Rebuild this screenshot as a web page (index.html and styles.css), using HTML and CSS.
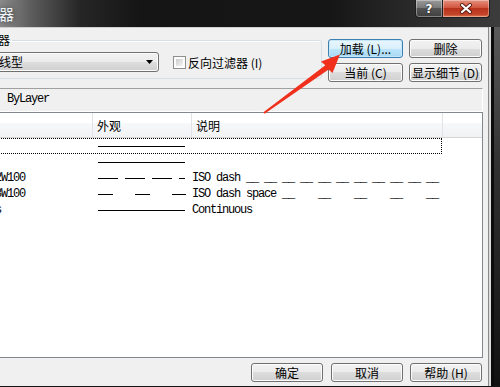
FILE: index.html
```html
<!DOCTYPE html>
<html>
<head>
    <meta charset="utf-8">
    <title>线型管理器</title>
    <link rel="stylesheet" href="styles.css">
</head>
<body>
<div class="window">
    <div class="titlebar">
        <span class="title">线型管理器</span>
        <div class="captionButtons">
            <span class="capHelp">?</span>
            <span class="capClose">
                <svg width="14" height="11" viewBox="0 0 14 11">
                    <path d="M3 2 L11 9 M11 2 L3 9" stroke="#5a1a10" stroke-width="4" stroke-linecap="round"/>
                    <path d="M3 2 L11 9 M11 2 L3 9" stroke="#fff" stroke-width="2.2" stroke-linecap="round"/>
                </svg>
            </span>
        </div>
    </div>

    <div class="middle">
        <div class="client">
            <div class="topRow">
                <fieldset class="filterGroup">
                    <legend>线型过滤器</legend>
                    <div class="filterRow">
                        <div class="combo">
                            <span>显示所有线型</span>
                            <svg class="comboArrow" width="7" height="4" viewBox="0 0 7 4"><path d="M0 0 H7 L3.5 4 Z" fill="#000"/></svg>
                        </div>
                        <span class="checkbox"></span>
                        <span class="checkLabel">反向过滤器 (I)</span>
                    </div>
                </fieldset>
                <div class="buttonGrid">
                    <button class="btn btnDefault">加载 (L)...</button>
                    <button class="btn">删除</button>
                    <button class="btn">当前 (C)</button>
                    <button class="btn">显示细节 (D)</button>
                </div>
            </div>

            <div class="currentBox">
                <span class="curLabel">当前线型:</span><span class="mono">ByLayer</span>
            </div>

            <div class="listBox">
                <div class="listHead">
                    <div class="col colName">线型</div>
                    <div class="col colLook">外观</div>
                    <div class="col colDesc">说明</div>
                    <div class="col colRest"></div>
                </div>

                <div class="row focused">
                    <span class="cell name mono">ByLayer</span>
                    <span class="cell look"><svg width="87" height="14"><line x1="0" y1="7.5" x2="87" y2="7.5"/></svg></span>
                    <span class="cell desc mono"></span>
                </div>
                <div class="row">
                    <span class="cell name mono">ByBlock</span>
                    <span class="cell look"><svg width="87" height="14"><line x1="0" y1="7.5" x2="87" y2="7.5"/></svg></span>
                    <span class="cell desc mono"></span>
                </div>
                <div class="row">
                    <span class="cell name mono">ACAD_ISO02W100</span>
                    <span class="cell look"><svg width="87" height="14"><line x1="0" y1="7.5" x2="87" y2="7.5" stroke-dasharray="20 7"/></svg></span>
                    <span class="cell desc mono">ISO dash __ __ __ __ __ __ __ __ __ __ __</span>
                </div>
                <div class="row">
                    <span class="cell name mono">ACAD_ISO03W100</span>
                    <span class="cell look"><svg width="88" height="14"><line x1="0" y1="7.5" x2="88" y2="7.5" stroke-dasharray="15 22"/></svg></span>
                    <span class="cell desc mono">ISO dash space __    __    __    __    __</span>
                </div>
                <div class="row">
                    <span class="cell name mono">Continuous</span>
                    <span class="cell look"><svg width="87" height="14"><line x1="0" y1="7.5" x2="87" y2="7.5"/></svg></span>
                    <span class="cell desc mono">Continuous</span>
                </div>
            </div>

            <div class="bottomButtons">
                <button class="btn">确定</button>
                <button class="btn">取消</button>
                <button class="btn">帮助 (H)</button>
            </div>
        </div>
        <div class="rightFrame"></div>
    </div>
    <div class="bottomFrame"></div>
</div>

<!-- red annotation arrow drawn over the dialog -->
<svg class="arrow" width="500" height="387" viewBox="0 0 500 387">
    <polygon points="263.4,112.2 325.3,65.2 321,61.5 340,54.5 332.5,73 328.6,69.6 264.6,113.8" fill="#f0301c"/>
</svg>
</body>
</html>
```

FILE: styles.css
```css
body {
    margin: 0;
    width: 500px;
    height: 387px;
    overflow: hidden;
    background-color: #111;
    font-family: "Noto Sans CJK SC", "Liberation Sans", sans-serif;
    font-size: 12px;
    color: #000;
    position: relative;
}

.window {
    display: flex;
    flex-direction: column;
    width: 500px;
    height: 387px;
}

/* title bar */
.titlebar {
    height: 27px;
    flex: none;
    display: flex;
    align-items: flex-start;
    background: linear-gradient(90deg, #8c8c8c 0, #5e5e5e 30px, #262626 80px, #151515 140px, #161616 330px, #2c2c2c 420px, #3c3c3c 500px);
}

.title {
    margin-left: -61px;
    margin-top: 5px;
    font-size: 15px;
    line-height: 17px;
    color: #eef4fa;
    white-space: nowrap;
    text-shadow: 0 0 6px rgba(0, 0, 0, 0.6);
}

.captionButtons {
    margin-left: auto;
    margin-right: 10px;
    display: flex;
}

.capHelp,
.capClose {
    height: 17px;
    border: 1px solid #1e1e1e;
    border-top: none;
    display: flex;
    justify-content: center;
    align-items: center;
    box-shadow: inset 0 0 0 1px rgba(255, 255, 255, 0.35);
}

.capHelp {
    width: 26px;
    border-radius: 0 0 0 4px;
    border-right: none;
    background: linear-gradient(#9a9a9a 0%, #7a7a7a 45%, #545454 50%, #3f3f3f 100%);
    color: #fff;
    font-family: "DejaVu Sans", sans-serif;
    font-weight: bold;
    font-size: 12px;
    text-shadow: 0 0 2px #000;
}

.capClose {
    width: 46px;
    border-radius: 0 0 4px 0;
    background: linear-gradient(#e4907f 0%, #d2563f 45%, #b8321c 50%, #c4452a 85%, #e07a58 100%);
}

/* frame */
.middle {
    display: flex;
    flex: none;
    height: 359px;
}

.client {
    width: 488px;
    height: 358px;
    flex: none;
    background-color: #f0f0f0;
    border-top: 1px solid #cfcfcf;
    display: flex;
    flex-direction: column;
}

.rightFrame {
    flex: 1;
    background:
        linear-gradient(90deg, #8a8a8a 0, #8a8a8a 1px, #dcdcdc 1px, #dcdcdc 3px, #0c0c0c 3px, #0c0c0c 6px, transparent 6px),
        linear-gradient(#5a5a5a 0%, #303030 40%, #111 100%);
}

.bottomFrame {
    height: 1px;
    background-color: #151515;
}

/* filter group */
.topRow {
    display: flex;
    align-items: flex-start;
    height: 54px;
    flex: none;
}

.filterGroup {
    box-sizing: border-box;
    width: 382px;
    margin: 5px 0 0 -60px;
    padding: 5px 0 6px 9px;
    border: 1px solid #d5dfe5;
    border-radius: 3px;
    box-shadow: inset 1px 1px 0 #fff;
}

.filterGroup legend {
    padding: 0 2px 0 0;
    line-height: 14px;
}

.filterRow {
    display: flex;
    align-items: center;
}

.combo {
    box-sizing: border-box;
    width: 209px;
    height: 20px;
    border: 1px solid #707070;
    border-radius: 3px;
    background: linear-gradient(#f2f2f2 0%, #ebebeb 50%, #dddddd 50%, #cfcfcf 100%);
    box-shadow: inset 0 0 0 1px #fcfcfc;
    display: flex;
    align-items: center;
    justify-content: space-between;
    padding-right: 5px;
    line-height: 18px;
}

.checkbox {
    box-sizing: border-box;
    width: 13px;
    height: 13px;
    margin-left: 14px;
    border: 1px solid #8e8f8f;
    padding: 2px;
    background: linear-gradient(135deg, #cbcbcb, #f6f6f6) content-box, linear-gradient(#fdfdfd, #fdfdfd) border-box;
}

.checkLabel {
    margin-left: 2px;
    white-space: nowrap;
}

.buttonGrid {
    display: grid;
    grid-template-columns: 75px 73px;
    grid-template-rows: 19px 19px;
    column-gap: 6px;
    row-gap: 5px;
    margin: 11px 0 0 6px;
}

/* buttons */
.btn {
    box-sizing: border-box;
    height: 19px;
    padding: 0;
    border: 1px solid #707070;
    border-radius: 3px;
    background: linear-gradient(#f2f2f2 0%, #ebebeb 50%, #dddddd 50%, #cfcfcf 100%);
    box-shadow: inset 0 0 0 1px #fcfcfc;
    font-family: "Noto Sans CJK SC", "Liberation Sans", sans-serif;
    font-size: 12px;
    line-height: 16px;
    color: #000;
    white-space: nowrap;
}

.btnDefault {
    border-color: #3c7fb1;
    background: linear-gradient(#eaf6fd 0%, #d9f0fc 50%, #bee6fd 50%, #a7d9f5 100%);
    box-shadow: inset 0 0 0 1px #c6e6f9;
}

/* current linetype */
.currentBox {
    box-sizing: border-box;
    flex: none;
    width: 547px;
    height: 24px;
    margin: 6px 0 0 -64px;
    padding: 0 0 3px 5px;
    border: 1px solid #a0a0a0;
    border-right-color: #fff;
    border-bottom-color: #fff;
    display: flex;
    align-items: center;
}

.curLabel {
    display: inline-block;
    width: 65px;
    white-space: nowrap;
}

.mono {
    font-family: "Liberation Mono", "DejaVu Sans Mono", monospace;
    font-size: 12px;
    letter-spacing: -1.2px;
    white-space: pre;
}

/* list */
.listBox {
    box-sizing: border-box;
    flex: none;
    width: 547px;
    height: 246px;
    margin-left: -64px;
    border: 1px solid #828790;
    background-color: #fff;
}

.listHead {
    display: flex;
    height: 25px;
    box-sizing: border-box;
    border-bottom: 1px solid #d5d5d5;
    background: linear-gradient(#ffffff 0%, #ffffff 40%, #f7f8f9 40%, #f1f2f4 100%);
}

.col {
    box-sizing: border-box;
    border-right: 1px solid #e2e3e6;
    padding-left: 4px;
    line-height: 26px;
    white-space: nowrap;
}

.colName {
    width: 156px;
}

.colLook {
    width: 99px;
}

.colDesc {
    width: 251px;
}

.colRest {
    flex: 1;
    border-right: none;
}

.row {
    box-sizing: border-box;
    width: 505px;
    height: 16px;
    border: 1px dotted transparent;
    display: grid;
    grid-template-columns: 155px 99px 249px;
    align-items: center;
    line-height: 14px;
}

.row.focused {
    border-color: #000;
}

.name {
    padding-left: 3px;
}

.look svg {
    display: block;
    margin-left: 5px;
}

.look line {
    stroke: #000;
    stroke-width: 1;
}

.desc {
    overflow: hidden;
}

/* bottom buttons */
.bottomButtons {
    display: flex;
    justify-content: flex-end;
    gap: 8px;
    margin-top: 5px;
    padding-right: 6px;
}

.bottomButtons .btn {
    width: 72px;
}

.bottomButtons .btn:last-child {
    margin-left: -1px;
}

.arrow {
    position: absolute;
    top: 0;
    left: 0;
    pointer-events: none;
}
```
